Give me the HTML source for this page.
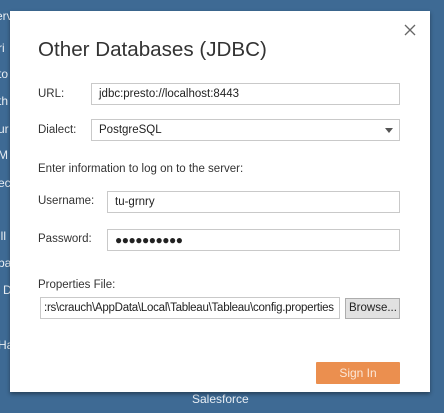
<!DOCTYPE html>
<html><head><style>
body{margin:0;width:444px;height:413px;background:#3e6a94;position:relative;overflow:hidden;font-family:"Liberation Sans",sans-serif;font-size:11.5px;color:#333}
.bg{position:absolute;color:#e8eef4;font-size:12px}
.dlg{position:absolute;left:10px;top:11px;width:420px;height:381px;background:#fff;box-shadow:0 2px 4px rgba(0,0,0,.4)}
.a{position:absolute}
.f{position:absolute;border:1px solid #c9c9c9;background:#fff;line-height:20px;padding-left:7px;box-sizing:border-box;height:22px;color:#222}
</style></head><body>
<div class="bg" style="left:-4px;top:9px">erv</div>
<div class="bg" style="left:-2px;top:41px">ri</div>
<div class="bg" style="left:-2px;top:67px">to</div>
<div class="bg" style="left:-2px;top:94px">th</div>
<div class="bg" style="left:-2px;top:122px">ur</div>
<div class="bg" style="left:-2px;top:148px">M</div>
<div class="bg" style="left:-2px;top:176px">ec</div>
<div class="bg" style="left:-2px;top:229px">ill</div>
<div class="bg" style="left:-2px;top:256px">ba</div>
<div class="bg" style="left:3px;top:283px">D</div>
<div class="bg" style="left:-2px;top:338px">Ha</div>
<div class="bg" style="left:192px;top:392px">Salesforce</div>
<div class="dlg">
<div class="a" style="left:28px;top:27px;font-size:20.6px;color:#333">Other Databases (JDBC)</div>
<svg class="a" style="left:394px;top:13px" width="12" height="12"><path d="M1 1L11 11M11 1L1 11" stroke="#666" stroke-width="1.3"/></svg>
<div class="a" style="left:28px;top:77px">URL:</div>
<div class="f" style="left:81px;top:72px;width:309px">jdbc:presto://localhost:8443</div>
<div class="a" style="left:28px;top:113px">Dialect:</div>
<div class="f" style="left:81px;top:108px;width:309px">PostgreSQL</div>
<svg class="a" style="left:375px;top:117px" width="8" height="5"><path d="M0 0H8L4 5Z" fill="#555"/></svg>
<div class="a" style="left:28px;top:152px">Enter information to log on to the server:</div>
<div class="a" style="left:28px;top:184px">Username:</div>
<div class="f" style="left:97px;top:180px;width:293px">tu-grnry</div>
<div class="a" style="left:28px;top:222px">Password:</div>
<div class="f" style="left:97px;top:218px;width:293px;font-size:12px;letter-spacing:-0.5px">●●●●●●●●●●</div>
<div class="a" style="left:28px;top:268px">Properties File:</div>
<div class="f" style="left:30px;top:286px;width:300px;padding-left:3px;overflow:hidden;white-space:nowrap;letter-spacing:-0.25px">:rs\crauch\AppData\Local\Tableau\Tableau\config.properties</div>
<div class="f" style="left:335px;top:287px;width:55px;height:21px;line-height:19px;background:#e1e1e1;border-color:#adadad;padding-left:3px">Browse...</div>
<div class="a" style="left:306px;top:351px;width:84px;height:22px;background:#eb8f4f;color:#fbe7d8;text-align:center;line-height:22px;font-size:12px;border-radius:1px">Sign In</div>
</div>
</body></html>
